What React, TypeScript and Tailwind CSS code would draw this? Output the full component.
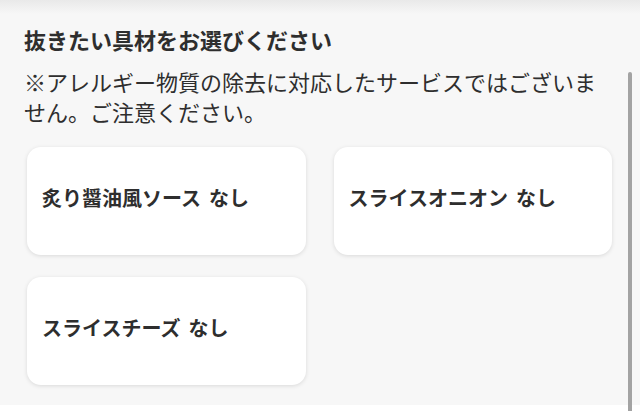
import React from "react";

const font = { fontFamily: '"Noto Sans CJK JP", "Noto Sans", sans-serif' };

export default function App() {
  const items = ["炙り醤油風ソース", "スライスオニオン", "スライスチーズ"];
  return (
    <div className="relative w-[640px] h-[411px] overflow-hidden bg-[#f7f7f7] text-[#2e2e2e]" style={font}>
      <div className="absolute top-0 left-0 right-0 h-[14px] bg-gradient-to-b from-[#e9e9e9] to-[#f7f7f7]" />
      <div className="relative pt-[23px] pl-[24px] pr-[28px]">
        <h2 className="text-[22px] font-bold leading-[32px]">抜きたい具材をお選びください</h2>
        <p className="mt-[11px] text-[22px] leading-[30px] max-w-[580px]">
          ※アレルギー物質の除去に対応したサービスではございま
          <br />
          せん。ご注意ください。
        </p>
        <div className="mt-[21px] ml-[3px] grid grid-cols-2 gap-x-[28px] gap-y-[22px]">
          {items.map((t) => (
            <div
              key={t}
              className="h-[108px] rounded-[14px] bg-white shadow-[0_1px_4px_rgba(0,0,0,0.12)] flex items-center pl-[15px] pb-[6px] text-[20px] font-bold"
            >
              <span>{t}</span>
              <span className="ml-[8px]">なし</span>
            </div>
          ))}
        </div>
      </div>
      <div className="absolute left-0 right-0 bottom-0 h-[6px] bg-white" />
      <div className="absolute left-[628px] top-[72px] bottom-0 w-[4px] bg-[#a3a3a3] rounded-t-full" />
    </div>
  );
}
